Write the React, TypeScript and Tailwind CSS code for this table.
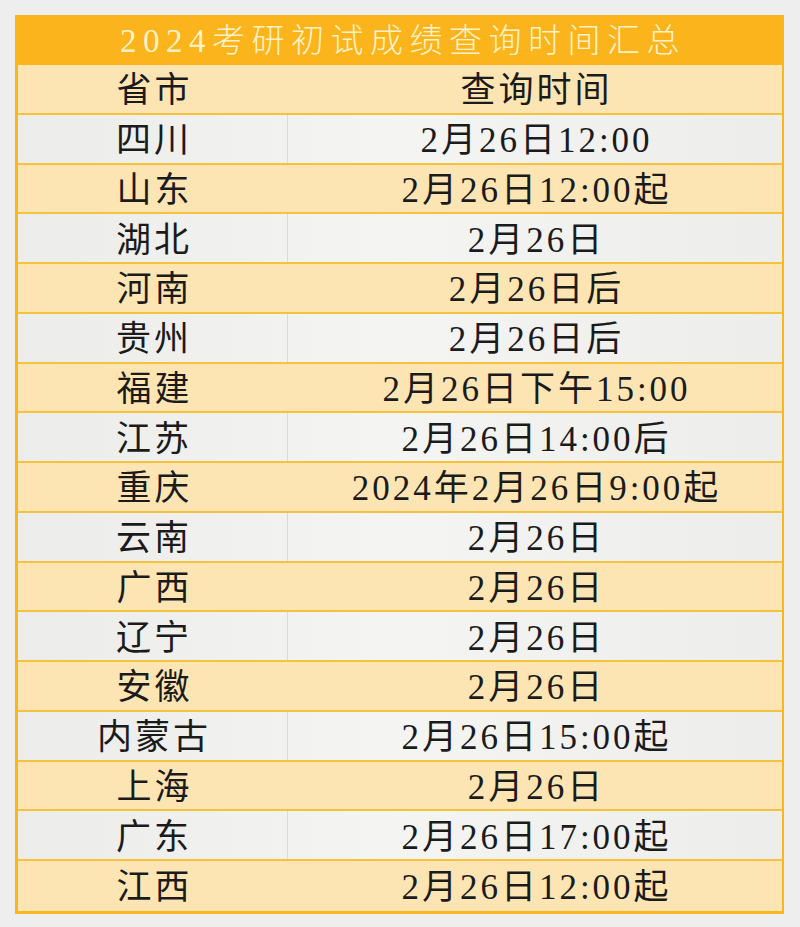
import React from "react";

const rows: [string, string][] = [
  ["四川", "2月26日12:00"],
  ["山东", "2月26日12:00起"],
  ["湖北", "2月26日"],
  ["河南", "2月26日后"],
  ["贵州", "2月26日后"],
  ["福建", "2月26日下午15:00"],
  ["江苏", "2月26日14:00后"],
  ["重庆", "2024年2月26日9:00起"],
  ["云南", "2月26日"],
  ["广西", "2月26日"],
  ["辽宁", "2月26日"],
  ["安徽", "2月26日"],
  ["内蒙古", "2月26日15:00起"],
  ["上海", "2月26日"],
  ["广东", "2月26日17:00起"],
  ["江西", "2月26日12:00起"],
];

const font = {
  fontFamily: '"Liberation Serif", "Noto Sans CJK SC", serif',
};

function Row({ a, b, gray, last }: { a: string; b: string; gray: boolean; last: boolean }) {
  return (
    <div
      className={
        "grid grid-cols-[270px_1fr] h-[49.75px] text-[35px] tracking-[3px] text-[#1b1b1b] leading-none " +
        (last ? "" : "border-b-2 border-[#f4c23c] ") +
        (gray ? "bg-gradient-to-r from-[#ececeb] via-[#f4f4f3] to-[#ededec]" : "bg-[#fde5b3]")
      }
    >
      <div
        className={
          "flex items-center justify-center pl-[3px] pt-[4px] " +
          (gray ? "border-r border-[#d9d9d6]" : "")
        }
      >
        {a}
      </div>
      <div className="flex items-center justify-center pl-[3px] pt-[4px]">{b}</div>
    </div>
  );
}

export default function App() {
  return (
    <div className="min-h-[927px] bg-[#eeeeee] pt-[15px] pl-[15px]" style={font}>
      <div className="w-[769px] border-l-[3px] border-r-2 border-b-[3px] border-[#f7b81f] bg-[#fde5b3]">
        <div className="h-[50px] bg-[#fbb41b] flex items-center justify-center text-[33px] tracking-[6.5px] text-[#fff2c8] font-light leading-none pl-[6px] pt-[2px]">
          2024考研初试成绩查询时间汇总
        </div>
        <Row a="省市" b="查询时间" gray={false} last={false} />
        {rows.map(([a, b], i) => (
          <Row key={a} a={a} b={b} gray={i % 2 === 0} last={i === rows.length - 1} />
        ))}
      </div>
    </div>
  );
}
